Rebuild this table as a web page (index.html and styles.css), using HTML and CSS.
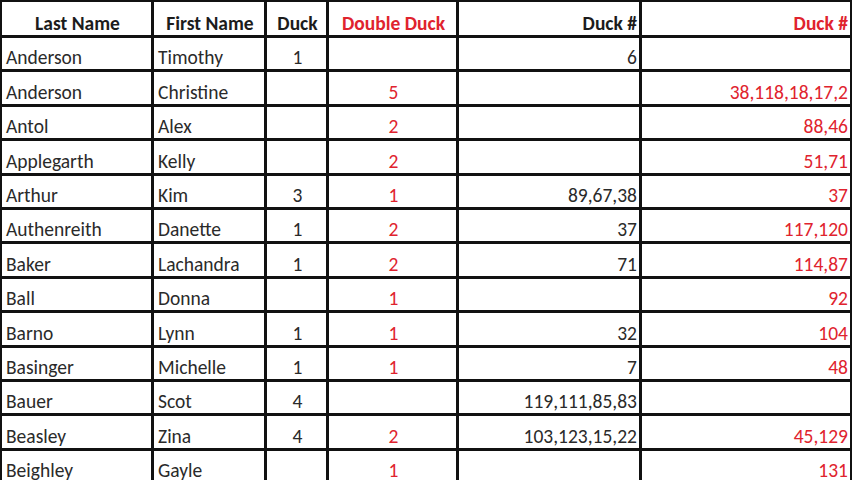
FILE: index.html
```html
<!DOCTYPE html>
<html>
<head>
<meta charset="utf-8">
<link rel="stylesheet" href="styles.css">
</head>
<body>
<table class="sheet">
<colgroup>
<col class="c-last"><col class="c-first"><col class="c-duck"><col class="c-dd"><col class="c-num"><col class="c-rnum">
</colgroup>
<thead>
<tr>
<th class="ctr">Last Name</th><th class="ctr">First Name</th><th class="ctr">Duck</th><th class="ctr red">Double Duck</th><th class="rt">Duck #</th><th class="rt red">Duck #</th>
</tr>
</thead>
<tbody>
<tr><td>Anderson</td><td>Timothy</td><td class="ctr">1</td><td class="ctr red"></td><td class="rt">6</td><td class="rt red"></td></tr>
<tr><td>Anderson</td><td>Christine</td><td class="ctr"></td><td class="ctr red">5</td><td class="rt"></td><td class="rt red">38,118,18,17,2</td></tr>
<tr><td>Antol</td><td>Alex</td><td class="ctr"></td><td class="ctr red">2</td><td class="rt"></td><td class="rt red">88,46</td></tr>
<tr><td>Applegarth</td><td>Kelly</td><td class="ctr"></td><td class="ctr red">2</td><td class="rt"></td><td class="rt red">51,71</td></tr>
<tr><td>Arthur</td><td>Kim</td><td class="ctr">3</td><td class="ctr red">1</td><td class="rt">89,67,38</td><td class="rt red">37</td></tr>
<tr><td>Authenreith</td><td>Danette</td><td class="ctr">1</td><td class="ctr red">2</td><td class="rt">37</td><td class="rt red">117,120</td></tr>
<tr><td>Baker</td><td>Lachandra</td><td class="ctr">1</td><td class="ctr red">2</td><td class="rt">71</td><td class="rt red">114,87</td></tr>
<tr><td>Ball</td><td>Donna</td><td class="ctr"></td><td class="ctr red">1</td><td class="rt"></td><td class="rt red">92</td></tr>
<tr><td>Barno</td><td>Lynn</td><td class="ctr">1</td><td class="ctr red">1</td><td class="rt">32</td><td class="rt red">104</td></tr>
<tr><td>Basinger</td><td>Michelle</td><td class="ctr">1</td><td class="ctr red">1</td><td class="rt">7</td><td class="rt red">48</td></tr>
<tr><td>Bauer</td><td>Scot</td><td class="ctr">4</td><td class="ctr red"></td><td class="rt">119,111,85,83</td><td class="rt red"></td></tr>
<tr><td>Beasley</td><td>Zina</td><td class="ctr">4</td><td class="ctr red">2</td><td class="rt">103,123,15,22</td><td class="rt red">45,129</td></tr>
<tr><td>Beighley</td><td>Gayle</td><td class="ctr"></td><td class="ctr red">1</td><td class="rt"></td><td class="rt red">131</td></tr>
</tbody>
</table>
</body>
</html>
```

FILE: styles.css
```css
html, body {
  margin: 0;
  padding: 0;
  background: #ffffff;
  overflow: hidden;
}
body {
  width: 852px;
  height: 480px;
  font-family: Carlito, Lato, "Open Sans", sans-serif;
  color: #2a2a2a;
}
.sheet {
  border-collapse: collapse;
  table-layout: fixed;
  width: 851px;
  margin: -1px 0 0 -1px;
}
.c-last { width: 152px; }
.c-first { width: 113px; }
.c-duck { width: 62px; }
.c-dd { width: 130px; }
.c-num { width: 183px; }
.c-rnum { width: 211px; }
.sheet th, .sheet td {
  border: 3px solid #111111;
  padding: 0 2px 2px 4px;
  vertical-align: bottom;
  text-align: left;
  font-size: 19.5px;
  line-height: 20px;
  white-space: nowrap;
  overflow: hidden;
}
.sheet thead tr { height: 36px; }
.sheet tbody tr { height: 34.4px; }
.sheet th {
  font-weight: 700;
  color: #1c1c1c;
  padding-bottom: 2px;
}
.sheet .ctr { text-align: center; }
.sheet .rt { text-align: right; padding-right: 2px; }
.sheet .red { color: #e0232e; }
```
